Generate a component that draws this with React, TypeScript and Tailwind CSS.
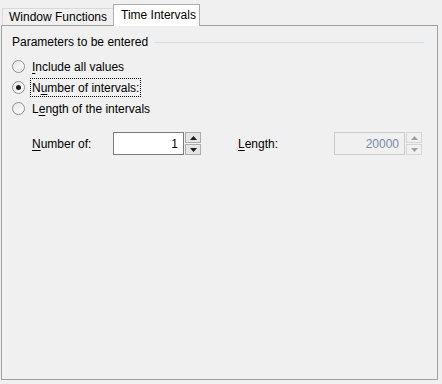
import type { ReactNode } from "react";

function Radio({ checked }: { checked?: boolean }) {
  return (
    <span className="flex h-[13px] w-[13px] shrink-0 items-center justify-center rounded-full border border-[#8f8f8f] bg-gradient-to-br from-[#e6e6e6] to-white">
      {checked ? <span className="h-[5px] w-[5px] rounded-full bg-[#1a1a1a]" /> : null}
    </span>
  );
}

function Option({
  checked,
  focused,
  children,
}: {
  checked?: boolean;
  focused?: boolean;
  children: ReactNode;
}) {
  return (
    <div className="flex h-[21px] items-center">
      <div className="ml-[10px] flex items-center">
        <Radio checked={checked} />
        <span
          className={`ml-[5px] flex h-[19px] items-center whitespace-nowrap px-[1px] ${
            focused ? "border border-dotted border-black" : "border border-transparent"
          }`}
        >
          {children}
        </span>
      </div>
    </div>
  );
}

function Arrow({ up, disabled }: { up?: boolean; disabled?: boolean }) {
  return (
    <svg width="7" height="4" viewBox="0 0 7 4">
      <path
        d={up ? "M0 4 L3.5 0 L7 4 Z" : "M0 0 L7 0 L3.5 4 Z"}
        fill={disabled ? "#a0a0a0" : "#1a1a1a"}
      />
    </svg>
  );
}

function Spin({ value, disabled }: { value: string; disabled?: boolean }) {
  const btn = disabled
    ? "border-[#d6d6d6] bg-[#f0f0f0]"
    : "border-[#adadad] bg-[#e5e5e5]";
  return (
    <div className="flex h-[23px]">
      <div
        className={`flex h-[23px] w-[71px] items-center justify-end border pr-[5px] ${
          disabled
            ? "border-[#cccccc] bg-[#f0f0f0] text-[#7a8ba3]"
            : "border-[#7a7a7a] bg-white text-black"
        }`}
      >
        {value}
      </div>
      <div className="ml-[1px] flex w-[16px] flex-col justify-between">
        <div className={`flex h-[11px] items-center justify-center border ${btn}`}>
          <Arrow up disabled={disabled} />
        </div>
        <div className={`flex h-[11px] items-center justify-center border ${btn}`}>
          <Arrow disabled={disabled} />
        </div>
      </div>
    </div>
  );
}

export default function App() {
  return (
    <div
      className="h-[384px] w-[442px] bg-[#f0f0f0] text-[12px] leading-none text-black"
      style={{ fontFamily: '"Liberation Sans", Arial, sans-serif' }}
    >
      {/* tab strip */}
      <div className="flex h-[25px] items-end pl-[2px]">
        <div className="flex h-[17px] w-[112px] items-center whitespace-nowrap border-l border-r border-t border-[#d9d9d9] bg-[#f0f0f0] pl-[6px]">
          Window Functions
        </div>
        <div className="relative z-10 -mb-px -ml-px flex h-[22px] w-[87px] items-center whitespace-nowrap border-l border-r border-t border-[#adadad] bg-white pb-[2px] pl-[7px]">
          Time Intervals
        </div>
      </div>

      {/* panel */}
      <div className="ml-[1px] h-[355px] w-[437px] border border-[#a0a0a0] bg-[#f0f0f0]">
        <div className="mt-[8px] flex h-[16px] items-center pl-[10px] pr-[13px]">
          <span className="whitespace-nowrap">Parameters to be entered</span>
          <span className="ml-[6px] h-px flex-1 bg-[#d5dfe5]" />
        </div>

        <div className="mt-[6px]">
          <Option>
            <span className="underline underline-offset-2">I</span>nclude all values
          </Option>
          <Option checked focused>
            N<span className="underline underline-offset-2">u</span>mber of intervals:
          </Option>
          <Option>
            L<span className="underline underline-offset-2">e</span>ngth of the intervals
          </Option>
        </div>

        <div className="mt-[13px] flex items-center pl-[30px]">
          <span className="w-[81px] whitespace-nowrap">
            <span className="underline underline-offset-2">N</span>umber of:
          </span>
          <Spin value="1" />
          <span className="ml-[37px] w-[96px] whitespace-nowrap">
            <span className="underline underline-offset-2">L</span>ength:
          </span>
          <Spin value="20000" disabled />
        </div>
      </div>
    </div>
  );
}
